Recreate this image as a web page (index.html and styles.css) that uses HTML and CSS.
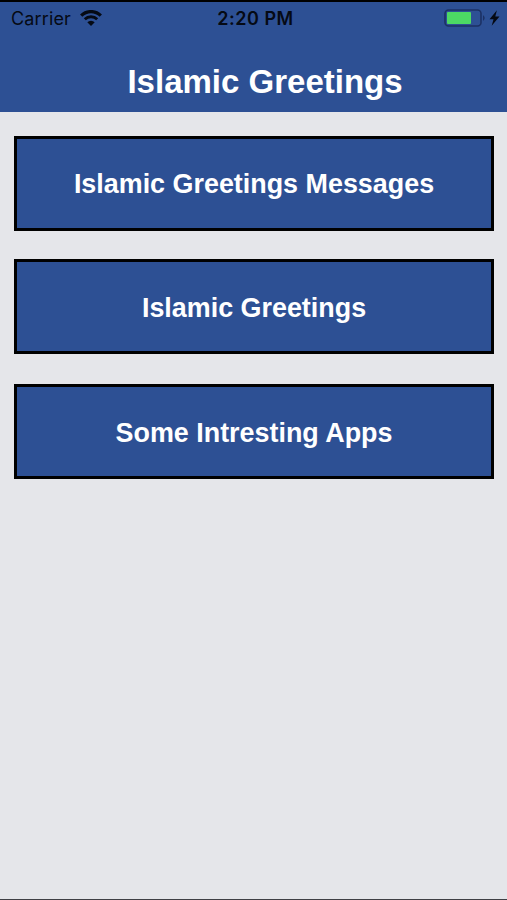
FILE: index.html
```
<!DOCTYPE html>
<html lang="en">
<head>
  <meta charset="UTF-8">
  <meta name="viewport" content="width=device-width, initial-scale=1.0">
  <title>Islamic Greetings</title>
  <link rel="stylesheet" href="styles.css">
</head>
<body>
  <header>
    <div class="status-bar">
      <div class="carrier">
        <span>Carrier</span>
        <svg class="wifi" width="22" height="16" viewBox="0 0 22 16">
          <path d="M1.2 5.6 A14 14 0 0 1 20.8 5.6" fill="none" stroke="#050a14" stroke-width="3.3"/>
          <path d="M4.8 9.3 A8.8 8.8 0 0 1 17.2 9.3" fill="none" stroke="#050a14" stroke-width="2.9"/>
          <path d="M11 16 L7.3 12.3 A5.3 5.3 0 0 1 14.7 12.3 Z" fill="#050a14"/>
        </svg>
      </div>
      <div class="time">2:20 PM</div>
      <div class="power">
        <svg width="42" height="18" viewBox="0 0 42 18">
          <rect x="1" y="1" width="36" height="16" rx="3.5" fill="none" stroke="#1c3164" stroke-width="1.6"/>
          <rect x="3" y="3" width="24" height="12" rx="1" fill="#4cd964"/>
          <path d="M39 6 Q42.4 9 39 12 Z" fill="#1c3164"/>
        </svg>
        <svg width="11" height="16" viewBox="0 0 10 16">
          <path d="M7.4 0.2 L0 9.2 H4 L2.2 15.8 L10 6.4 H5.8 Z" fill="#050a14"/>
        </svg>
      </div>
    </div>
    <h1>Islamic Greetings</h1>
  </header>
  <main>
    <button>Islamic Greetings Messages</button>
    <button>Islamic Greetings</button>
    <button>Some Intresting Apps</button>
  </main>
</body>
</html>
```
FILE: styles.css
```
* {
  box-sizing: border-box;
}
body {
  margin: 0;
  height: 900px;
  overflow: hidden;
  font-family: "Liberation Sans", Arial, sans-serif;
  background-color: #e5e6ea;
  border-top: 2px solid #000;
  border-bottom: 1px solid #3f4045;
}
header {
  height: 110px;
  background-color: #2d5094;
}
.status-bar {
  display: grid;
  grid-template-columns: 1fr auto 1fr;
  align-items: center;
  height: 32px;
  padding: 0 7px 0 11px;
  color: #050a14;
  font-family: Inter, "Liberation Sans", sans-serif;
  font-size: 18px;
}
.carrier {
  display: flex;
  align-items: center;
  gap: 9px;
  letter-spacing: 0.15px;
}
.wifi {
  margin-top: -1px;
}
.time {
  font-weight: 600;
  letter-spacing: 0.5px;
}
.power {
  display: flex;
  align-items: center;
  justify-content: flex-end;
  gap: 3px;
}
h1 {
  margin: 0;
  padding: 29px 0 0 23px;
  color: #fff;
  font-size: 33px;
  line-height: 38px;
  text-align: center;
}
main {
  display: flex;
  flex-direction: column;
  gap: 29px;
  padding: 24px 13px 0 14px;
}
button {
  height: 95px;
  padding: 1px 0 0;
  border: 3px solid #000;
  background-color: #2d5094;
  color: #fff;
  font-family: inherit;
  font-size: 26.9px;
  font-weight: bold;
}
button:nth-child(2) {
  margin: -1px 0 1px;
  padding-top: 4px;
}
button:nth-child(3) {
  padding-top: 4px;
}
```
